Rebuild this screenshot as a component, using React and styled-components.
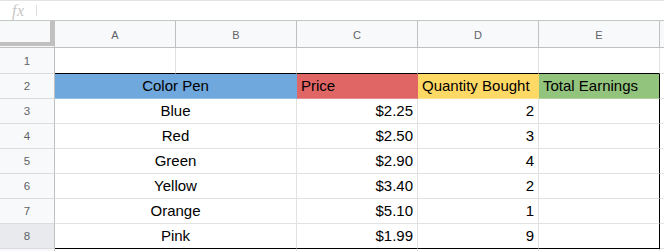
import React from "react";
import styled, { createGlobalStyle } from "styled-components";

const Global = createGlobalStyle`
  html, body { margin: 0; padding: 0; background: #fff; overflow: hidden; }
  body { font-family: "Liberation Sans", Arial, sans-serif; }
`;

const Page = styled.div`
  width: 664px;
  height: 251px;
  overflow: hidden;
  display: flex;
  flex-direction: column;
`;

const FormulaBar = styled.div`
  box-sizing: border-box;
  flex: 0 0 21px;
  height: 21px;
  border-top: 1px solid #e3e3e3;
  border-bottom: 1px solid #c4c7c5;
  display: flex;
  align-items: center;
  padding-left: 12px;
  gap: 11px;
`;

const Fx = styled.span`
  font-family: "Liberation Serif", "Times New Roman", serif;
  font-style: italic;
  font-size: 16px;
  line-height: 16px;
  color: #c7c7c7;
  letter-spacing: 0.5px;
`;

const Sep = styled.span`
  width: 1px;
  height: 11px;
  background: #dadce0;
`;

const Grid = styled.div`
  flex: 0 0 auto;
  display: grid;
  grid-template-columns: 55px repeat(5, 121px) 1fr;
  grid-template-rows: 27px 26px repeat(7, 25px) 12px;
`;

const Corner = styled.div`
  box-sizing: border-box;
  border-right: 1px solid #c0c0c0;
  border-bottom: 1px solid #c0c0c0;
  background: #f8f9fa;
  display: flex;
`;

const CornerInner = styled.div`
  box-sizing: border-box;
  width: 54px;
  height: 25px;
  border-right: 4px solid #c0c0c0;
  border-bottom: 4px solid #c0c0c0;
  background: #f8f9fa;
`;

const ColHead = styled.div`
  box-sizing: border-box;
  background: #f8f9fa;
  border-right: 1px solid #c0c0c0;
  border-bottom: 1px solid #c0c0c0;
  display: flex;
  align-items: center;
  justify-content: center;
  font-size: 11px;
  color: #5f6368;
  padding-top: 1px;
`;

const RowHead = styled.div`
  box-sizing: border-box;
  background: ${(p) => (p.$active ? "#e8eaed" : "#f8f9fa")};
  border-right: 1px solid #c0c0c0;
  border-bottom: 1px solid #dadce0;
  display: flex;
  align-items: center;
  justify-content: center;
  font-size: 11.5px;
  color: #5f6368;
`;

const Cell = styled.div`
  box-sizing: border-box;
  grid-column: ${(p) => (p.$span ? `span ${p.$span}` : "auto")};
  background: ${(p) => p.$bg || "#fff"};
  border-right: 1px solid ${(p) => p.$right || "#e2e2e3"};
  border-bottom: 1px solid ${(p) => p.$bottom || "#e2e2e3"};
  padding: 0 4px;
  font-size: 15px;
  line-height: 24px;
  color: #000;
  text-align: ${(p) => p.$align || "left"};
  white-space: nowrap;
  overflow: hidden;
`;

const BLACK = "#000";
const data = [
  ["Blue", "$2.25", "2"],
  ["Red", "$2.50", "3"],
  ["Green", "$2.90", "4"],
  ["Yellow", "$3.40", "2"],
  ["Orange", "$5.10", "1"],
  ["Pink", "$1.99", "9"],
];

const headers = [
  { text: "Color Pen", bg: "#6fa8dc", span: 2, align: "center" },
  { text: "Price", bg: "#e06666" },
  { text: "Quantity Bought", bg: "#ffd966" },
  { text: "Total Earnings", bg: "#93c47d" },
];

export default function App() {
  return (
    <Page>
      <Global />
      <FormulaBar>
        <Fx>fx</Fx>
        <Sep />
      </FormulaBar>
      <Grid>
        <Corner>
          <CornerInner />
        </Corner>
        {["A", "B", "C", "D", "E"].map((c) => (
          <ColHead key={c}>{c}</ColHead>
        ))}
        <ColHead />

        <RowHead>1</RowHead>
        {[0, 1, 2, 3].map((i) => (
          <Cell key={i} $bottom={BLACK} />
        ))}
        <Cell $bottom={BLACK} />
        <Cell $right="transparent" />

        <RowHead>2</RowHead>
        {headers.map((h, i) => (
          <Cell
            key={h.text}
            $span={h.span}
            $bg={h.bg}
            $align={h.align}
            $right={i === headers.length - 1 ? BLACK : "transparent"}
            $bottom="rgba(255,255,255,0.25)"
          >
            {h.text}
          </Cell>
        ))}
        <Cell $right="transparent" />

        {data.map((row, r) => {
          const last = r === data.length - 1;
          const bottom = last ? BLACK : undefined;
          return (
            <React.Fragment key={row[0]}>
              <RowHead $active={last}>{r + 3}</RowHead>
              <Cell $span={2} $align="center" $bottom={bottom}>
                {row[0]}
              </Cell>
              <Cell $align="right" $bottom={bottom}>
                {row[1]}
              </Cell>
              <Cell $align="right" $bottom={bottom}>
                {row[2]}
              </Cell>
              <Cell $right={BLACK} $bottom={bottom} />
              <Cell $right="transparent" />
            </React.Fragment>
          );
        })}

        <RowHead />
        <Cell $span={2} />
        <Cell />
        <Cell />
        <Cell />
        <Cell $right="transparent" />
      </Grid>
    </Page>
  );
}
